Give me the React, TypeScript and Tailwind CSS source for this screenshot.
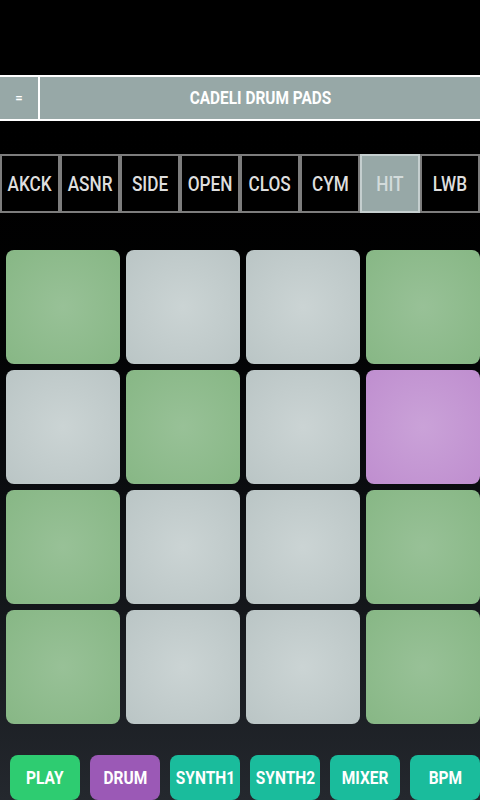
import React from 'react';

const tabs = ['AKCK', 'ASNR', 'SIDE', 'OPEN', 'CLOS', 'CYM', 'HIT', 'LWB'];

// g = green, w = light gray, p = purple
const pads = ['g', 'w', 'w', 'g', 'w', 'g', 'w', 'p', 'g', 'w', 'w', 'g', 'g', 'w', 'w', 'g'];

const padClass: Record<string, string> = {
  g: 'bg-[radial-gradient(circle,#98c197_0%,#87b785_100%)]',
  w: 'bg-[radial-gradient(circle,#cbd4d4_0%,#bac5c5_100%)]',
  p: 'bg-[radial-gradient(circle,#caa2d8_0%,#bf8ecf_100%)]',
};

const buttons = [
  { label: 'PLAY', cls: 'bg-[#2ecc71]' },
  { label: 'DRUM', cls: 'bg-[#9b59b6]' },
  { label: 'SYNTH1', cls: 'bg-[#1abc9c]' },
  { label: 'SYNTH2', cls: 'bg-[#1abc9c]' },
  { label: 'MIXER', cls: 'bg-[#1abc9c]' },
  { label: 'BPM', cls: 'bg-[#1abc9c]' },
];

const App = () => {
  return (
    <div className="w-[480px] h-[800px] overflow-hidden bg-gradient-to-b from-black from-[9%] to-[#24282e] font-['Roboto',sans-serif] flex flex-col">
      <div className="h-[75px] shrink-0" />

      {/* header bar */}
      <div className="h-[46px] shrink-0 flex bg-[#97a8a7] border-y-2 border-white">
        <div className="w-[40px] flex items-center justify-center border-r-2 border-white text-white text-[13px] font-bold">
          =
        </div>
        <div className="flex-1 flex items-center justify-center text-white text-[17.5px] font-bold">
          <span className="inline-block scale-x-[0.88]">CADELI DRUM PADS</span>
        </div>
      </div>

      {/* sound tabs */}
      <div className="mt-[33px] h-[59px] shrink-0 flex">
        {tabs.map((t) => (
          <div
            key={t}
            className={
              'w-[60px] flex items-center justify-center border-2 text-[20px] font-medium ' +
              (t === 'HIT'
                ? 'bg-[#97a8a7] border-[#c5cfcf] text-[#d3dbdb]'
                : 'bg-black border-[#7d7d7d] text-[#dedede]')
            }
          >
            <span className="inline-block scale-x-[0.86]">{t}</span>
          </div>
        ))}
      </div>

      {/* pads */}
      <div className="mt-[37px] pl-[6px] grid grid-cols-4 gap-[6px]">
        {pads.map((p, i) => (
          <div key={i} className={'h-[114px] rounded-[8px] ' + padClass[p]} />
        ))}
      </div>

      {/* bottom buttons */}
      <div className="mt-[31px] pl-[10px] flex gap-[10px]">
        {buttons.map((b) => (
          <div
            key={b.label}
            className={'w-[70px] h-[45px] rounded-[8px] flex items-center justify-center text-white text-[18px] font-bold ' + b.cls}
          >
            <span className="inline-block scale-x-[0.86]">{b.label}</span>
          </div>
        ))}
      </div>
    </div>
  );
};

export default App;
